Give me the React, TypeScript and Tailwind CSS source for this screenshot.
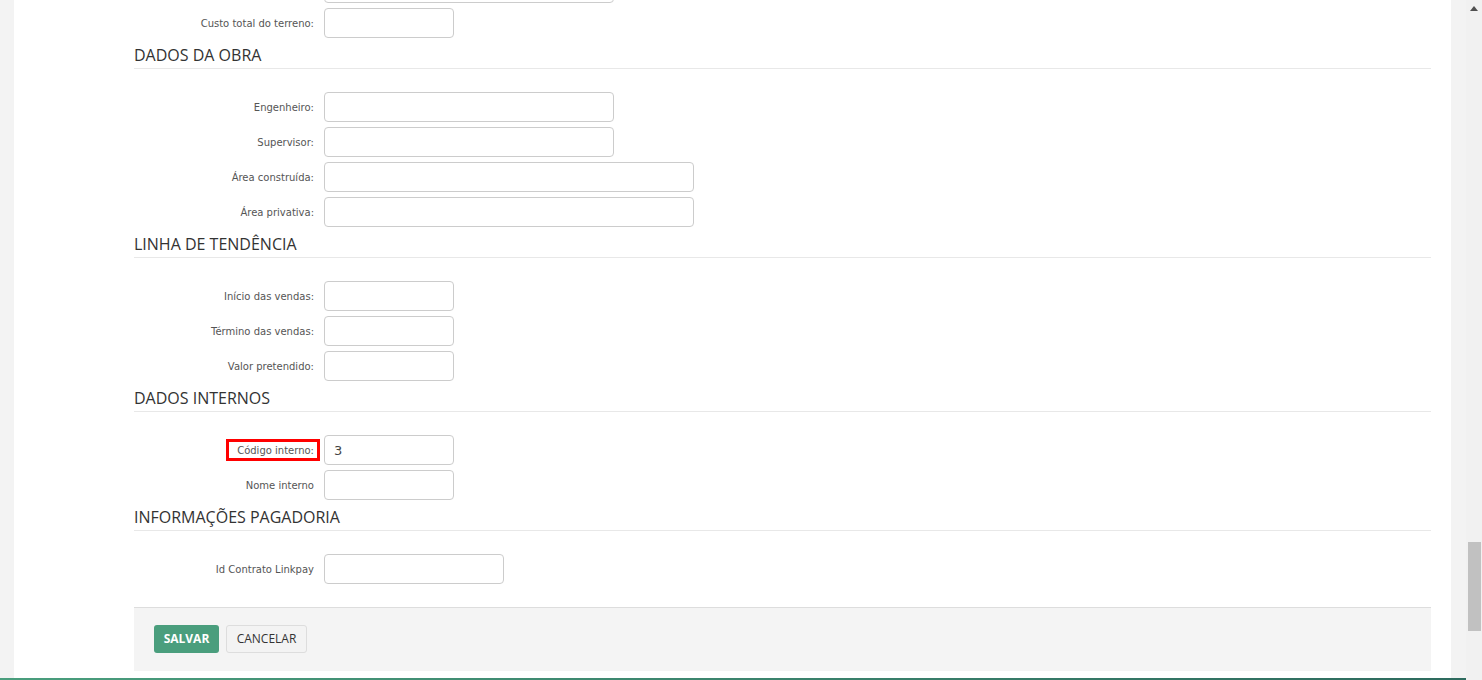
type Row = { label: string; width: string; value?: string; marked?: boolean };
type Section = { title?: string; rows: Row[] };

const sections: Section[] = [
  {
    rows: [
      { label: "", width: "w-[290px]" },
      { label: "Custo total do terreno:", width: "w-[130px]" },
    ],
  },
  {
    title: "DADOS DA OBRA",
    rows: [
      { label: "Engenheiro:", width: "w-[290px]" },
      { label: "Supervisor:", width: "w-[290px]" },
      { label: "Área construída:", width: "w-[370px]" },
      { label: "Área privativa:", width: "w-[370px]" },
    ],
  },
  {
    title: "LINHA DE TENDÊNCIA",
    rows: [
      { label: "Início das vendas:", width: "w-[130px]" },
      { label: "Término das vendas:", width: "w-[130px]" },
      { label: "Valor pretendido:", width: "w-[130px]" },
    ],
  },
  {
    title: "DADOS INTERNOS",
    rows: [
      { label: "Código interno:", width: "w-[130px]", value: "3", marked: true },
      { label: "Nome interno", width: "w-[130px]" },
    ],
  },
  {
    title: "INFORMAÇÕES PAGADORIA",
    rows: [{ label: "Id Contrato Linkpay", width: "w-[180px]" }],
  },
];

function FieldRow({ row }: { row: Row }) {
  return (
    <div className="flex items-center h-[30px] mb-[5px]">
      <div className="w-[190px] pr-[10px] flex justify-end shrink-0">
        <span className="relative text-[10px] leading-[13px] text-[#555]">
          {row.marked && (
            <span className="absolute -left-[11px] -right-[6px] -top-[5px] -bottom-[4px] border-[3px] border-[#ff0000]" />
          )}
          <span className="relative">{row.label}</span>
        </span>
      </div>
      <input
        readOnly
        value={row.value ?? ""}
        className={`${row.width} h-[30px] border border-[#ccc] rounded-[4px] bg-white px-[9px] text-[13px] text-[#444] outline-none`}
      />
    </div>
  );
}

export default function App() {
  return (
    <div
      className="flex h-[680px] w-[1482px] overflow-hidden bg-[#f3f3f3]"
      style={{ fontFamily: '"DejaVu Sans", Verdana, sans-serif' }}
    >
      <div className="flex-1 flex flex-col">
        <div className="flex-1 overflow-hidden pl-[14px] pr-[15px]">
          <div className="bg-white h-full pl-[120px] pr-[20px] flex flex-col">
            <div className="-mt-[27px]">
              {sections.map((s, i) => (
                <div key={i}>
                  {s.title && (
                    <div className="mt-[7px] mb-[23px] pb-[3px] border-b border-[#e8e8e8]">
                      <h2
                        className="text-[16px] leading-[20px] text-[#333]"
                        style={{ fontFamily: '"Open Sans", sans-serif' }}
                      >
                        {s.title}
                      </h2>
                    </div>
                  )}
                  {s.rows.map((r, j) => (
                    <FieldRow key={j} row={r} />
                  ))}
                </div>
              ))}
            </div>
            <div
              className="mt-[18px] h-[64px] shrink-0 bg-[#f4f4f4] border-t border-[#ddd] pl-[20px] pt-[17px] flex gap-[7px]"
              style={{ fontFamily: '"Open Sans", sans-serif' }}
            >
              <button className="h-[28px] w-[65px] rounded-[3px] bg-[#4a9e7d] text-white text-[12px] font-bold">
                SALVAR
              </button>
              <button className="h-[28px] w-[81px] rounded-[3px] bg-[#f3f3f3] border border-[#ddd] text-[#333] text-[12px]">
                CANCELAR
              </button>
            </div>
          </div>
        </div>
        <div className="h-[2px] bg-gradient-to-r from-[#4a9e7d] to-[#2e6b5e]" />
      </div>
      <div className="w-[16px] bg-[#f1f1f1] relative">
        <svg className="absolute left-[4px] top-[6px]" width="8" height="5" viewBox="0 0 8 5">
          <polygon points="4,0 8,5 0,5" fill="#505050" />
        </svg>
        <div className="absolute left-[2px] right-[1px] top-[542px] h-[89px] bg-[#c1c1c1]" />
      </div>
    </div>
  );
}
